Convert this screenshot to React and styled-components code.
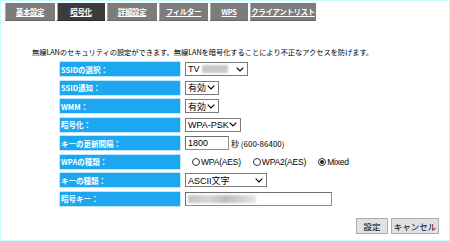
import React from "react";
import styled, { createGlobalStyle } from "styled-components";

const GlobalStyle = createGlobalStyle`
  html, body { margin: 0; padding: 0; background: #fff; }
  body {
    font-family: "Noto Sans CJK JP", "Noto Sans", sans-serif;
    font-size: 8px;
    color: #000;
  }
`;

const Page = styled.div`
  box-sizing: border-box;
  width: 450px;
  height: 241px;
  border: 1px solid #c4fbfb;
  padding: 2px 0 0 4px;
`;

const TabBar = styled.div`
  display: flex;
  gap: 2px;
  height: 18px;
`;

const Tab = styled.div`
  width: ${p => p.w}px;
  background: ${p => (p.active ? "#3c3c3c" : "#7c7c7c")};
  border-bottom: 1px solid ${p => (p.active ? "#2a2a2a" : "#686868")};
  box-shadow: inset 1px 0 0 #a9a9a9;
  color: #fff;
  display: flex;
  align-items: center;
  justify-content: center;
  white-space: nowrap;
  font-size: 7.5px;
  font-weight: bold;
  text-decoration: underline;
  letter-spacing: -0.4px;
`;

const Description = styled.p`
  margin: 26px 0 0 27px;
  font-size: 7.3px;
  line-height: 10px;
  letter-spacing: -0.1px;
`;

const Form = styled.div`
  display: grid;
  grid-template-columns: 120px 1fr;
  grid-auto-rows: 14px;
  row-gap: 4.5px;
  column-gap: 5px;
  margin: 5px 0 0 55px;
`;

const Label = styled.div`
  background: #1ea7f1;
  box-shadow: 0 0 0 0.5px #7fcff6;
  color: #fff;
  font-size: 7.5px;
  font-weight: bold;
  display: flex;
  align-items: center;
  padding-left: 1px;
`;

const Field = styled.div`
  display: flex;
  align-items: center;
`;

const Select = styled.div`
  box-sizing: border-box;
  width: ${p => p.w}px;
  height: 14px;
  border: 1px solid #7a7a7a;
  background: #fff;
  display: flex;
  align-items: center;
  padding: 0 3px 0 2px;
  font-family: "Liberation Sans", "Noto Sans CJK JP", sans-serif;
  font-size: 9px;
  svg { margin-left: auto; }
`;

const Blur = styled.span`
  display: inline-block;
  width: ${p => p.w}px;
  height: 8px;
  margin-left: ${p => p.ml || 0}px;
  background: ${p => p.bg};
  filter: blur(1px);
`;

const Input = styled.div`
  box-sizing: border-box;
  width: ${p => p.w}px;
  height: 14px;
  border: 1px solid #8f8f8f;
  border-top-color: #6d6d6d;
  border-left-color: #6d6d6d;
  background: #fff;
  display: flex;
  align-items: center;
  padding-left: 2px;
  font-family: "Liberation Sans", sans-serif;
  font-size: 9px;
`;

const Note = styled.span`
  font-size: 8px;
  margin-left: 2px;
`;

const RadioItem = styled.label`
  display: flex;
  align-items: center;
  gap: 1px;
  margin-left: ${p => p.ml}px;
  font-family: "Liberation Sans", sans-serif;
  font-size: 8.5px;
  letter-spacing: -0.2px;
`;

const RadioDot = styled.span`
  box-sizing: border-box;
  width: 8px;
  height: 8px;
  border-radius: 50%;
  border: 1px solid #333;
  display: flex;
  align-items: center;
  justify-content: center;
  &::after {
    content: "";
    width: 4px;
    height: 4px;
    border-radius: 50%;
    background: ${p => (p.checked ? "#222" : "transparent")};
  }
`;

const Buttons = styled.div`
  display: flex;
  justify-content: flex-end;
  gap: 3px;
  margin: 12px 10px 0 0;
`;

const Button = styled.button`
  box-sizing: border-box;
  width: ${p => p.w}px;
  height: 16px;
  padding: 0;
  border: 1px solid #adadad;
  background: #e1e1e1;
  font-family: "Noto Sans CJK JP", sans-serif;
  font-size: 8.5px;
  color: #000;
`;

const Chevron = () => (
  <svg width="8" height="5" viewBox="0 0 8 5">
    <polyline points="0.7,0.7 4,4 7.3,0.7" fill="none" stroke="#000" strokeWidth="1.2" />
  </svg>
);

const tabs = [
  { name: "基本設定", w: 50 },
  { name: "暗号化", w: 48, active: true },
  { name: "詳細設定", w: 50 },
  { name: "フィルター", w: 49 },
  { name: "WPS", w: 38 },
  { name: "クライアントリスト", w: 66 },
];

export default function App() {
  return (
    <Page>
      <GlobalStyle />
      <TabBar>
        {tabs.map(t => (
          <Tab key={t.name} w={t.w} active={t.active}>
            {t.name}
          </Tab>
        ))}
      </TabBar>
      <Description>
        無線LANのセキュリティの設定ができます。無線LANを暗号化することにより不正なアクセスを防げます。
      </Description>
      <Form>
        <Label>SSIDの選択：</Label>
        <Field>
          <Select w={63}>
            TV
            <Blur w={26} ml={2} bg="#c8c8c8" />
            <Chevron />
          </Select>
        </Field>

        <Label>SSID通知：</Label>
        <Field>
          <Select w={34}>
            有効
            <Chevron />
          </Select>
        </Field>

        <Label>WMM：</Label>
        <Field>
          <Select w={34}>
            有効
            <Chevron />
          </Select>
        </Field>

        <Label>暗号化：</Label>
        <Field>
          <Select w={56}>
            WPA-PSK
            <Chevron />
          </Select>
        </Field>

        <Label>キーの更新間隔：</Label>
        <Field>
          <Input w={44}>1800</Input>
          <Note>秒 (600-86400)</Note>
        </Field>

        <Label>WPAの種類：</Label>
        <Field>
          <RadioItem ml={7}>
            <RadioDot />
            WPA(AES)
          </RadioItem>
          <RadioItem ml={12}>
            <RadioDot />
            WPA2(AES)
          </RadioItem>
          <RadioItem ml={12}>
            <RadioDot checked />
            Mixed
          </RadioItem>
        </Field>

        <Label>キーの種類：</Label>
        <Field>
          <Select w={82}>
            ASCII文字
            <Chevron />
          </Select>
        </Field>

        <Label>暗号キー：</Label>
        <Field>
          <Input w={147}>
            <Blur w={68} bg="linear-gradient(90deg,#c4c4c4,#d6d6d6 30%,#bdbdbd 55%,#cfcfcf 75%,#e4e4e4)" />
          </Input>
        </Field>
      </Form>
      <Buttons>
        <Button w={32}>設定</Button>
        <Button w={48}>キャンセル</Button>
      </Buttons>
    </Page>
  );
}
